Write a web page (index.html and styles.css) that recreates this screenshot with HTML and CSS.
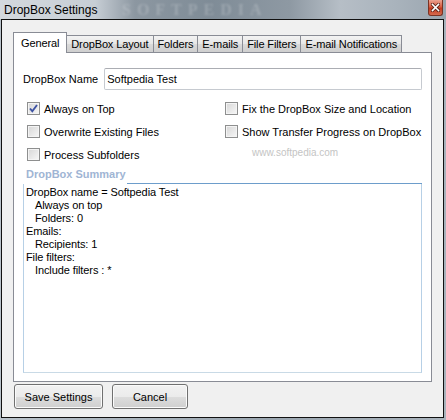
FILE: index.html
```html
<!DOCTYPE html>
<html lang="en">
<head>
    <meta charset="UTF-8">
    <meta name="viewport" content="width=device-width, initial-scale=1.0">
    <title>DropBox Settings</title>
    <link rel="stylesheet" href="styles.css">
</head>
<body>
    <div class="window">
        <div class="titlebar">
            <span class="title">DropBox Settings</span>
            <span class="title-mark">SOFTPEDIA</span>
            <div class="close">
                <svg width="9" height="9" viewBox="0 0 9 9">
                    <path d="M1.5 1.5 L7.5 7.5 M7.5 1.5 L1.5 7.5" stroke="#5a2418" stroke-width="3.2" stroke-linecap="square"/>
                    <path d="M1.5 1.5 L7.5 7.5 M7.5 1.5 L1.5 7.5" stroke="#fff" stroke-width="1.6" stroke-linecap="square"/>
                </svg>
            </div>
        </div>
        <div class="client">
            <div class="tabs">
                <div class="tab active">General</div>
                <div class="tab">DropBox Layout</div>
                <div class="tab">Folders</div>
                <div class="tab">E-mails</div>
                <div class="tab">File Filters</div>
                <div class="tab">E-mail Notifications</div>
            </div>
            <div class="panel">
                <div class="name-row">
                    <label for="dbname">DropBox Name</label>
                    <input type="text" id="dbname" value="Softpedia Test">
                </div>
                <div class="options">
                    <div class="check">
                        <span class="box">
                            <svg width="11" height="11" viewBox="0 0 11 11">
                                <path d="M2 5.5 L4.3 8.2 L9 2" fill="none" stroke="#3d52a3" stroke-width="1.9"/>
                            </svg>
                        </span>
                        Always on Top
                    </div>
                    <div class="check"><span class="box"></span>Fix the DropBox Size and Location</div>
                    <div class="check"><span class="box"></span>Overwrite Existing Files</div>
                    <div class="check"><span class="box"></span>Show Transfer Progress on DropBox</div>
                    <div class="check"><span class="box"></span>Process Subfolders</div>
                </div>
                <div class="summary-head">
                    <span class="summary-title">DropBox Summary</span>
                    <span class="rule"></span>
                </div>
                <div class="summary">
                    <div>DropBox name = Softpedia Test</div>
                    <div class="sub">Always on top</div>
                    <div class="sub">Folders: 0</div>
                    <div>Emails:</div>
                    <div class="sub">Recipients: 1</div>
                    <div>File filters:</div>
                    <div class="sub">Include filters : *</div>
                </div>
                <span class="watermark">www.softpedia.com</span>
            </div>
            <div class="buttons">
                <button class="btn save">Save Settings</button>
                <button class="btn cancel">Cancel</button>
            </div>
        </div>
    </div>
</body>
</html>
```

FILE: styles.css
```css
body {
    margin: 0;
    font-family: "Liberation Sans", Arial, sans-serif;
    font-size: 11px;
    color: #000;
}
.window {
    width: 446px;
    height: 420px;
    overflow: hidden;
    background: linear-gradient(90deg, #b9c2ca, #9aa6b0 60%, #a9b3bc);
}
.titlebar {
    position: relative;
    height: 19px;
    display: flex;
    align-items: center;
    padding-left: 4px;
    background: linear-gradient(90deg, #d4d9de 0, #c7ced5 95px, #8c97a1 135px, #7f8c97 210px, #8e99a3 290px, #b6bec6 340px, #a9b3bc 395px, #9aa5af 446px);
}
.title {
    font-size: 12px;
    position: relative;
    z-index: 1;
}
.title-mark {
    position: absolute;
    left: 122px;
    top: 1px;
    line-height: 18px;
    font-family: "Liberation Serif", serif;
    font-size: 16px;
    font-weight: bold;
    letter-spacing: 6px;
    color: rgba(255, 255, 255, 0.2);
    filter: blur(1px);
}
.close {
    position: absolute;
    right: 3px;
    top: 0;
    width: 15px;
    height: 16px;
    box-sizing: border-box;
    border: 1px solid #7a3324;
    border-top: none;
    border-radius: 0 0 3px 3px;
    background: linear-gradient(#eaa391, #d75c41 45%, #c23a1f 55%, #d66b4f);
    display: flex;
    align-items: center;
    justify-content: center;
}
.client {
    margin-left: 1px;
    width: 443px;
    height: 399px;
    box-sizing: border-box;
    border: 1px solid #111;
    background-color: #f0f0f0;
    padding: 12px 11px 0 11px;
}
.tabs {
    display: flex;
    align-items: flex-end;
    height: 20px;
}
.tab {
    height: 17px;
    box-sizing: border-box;
    padding: 0 4px;
    margin-right: -1px;
    display: flex;
    align-items: center;
    border: 1px solid #898c95;
    border-bottom: none;
    background: linear-gradient(#f3f3f3, #e6e6e6 50%, #dadada 51%, #cfcfcf);
    white-space: nowrap;
    letter-spacing: -0.12px;
}
.tab.active {
    height: 21px;
    margin-bottom: -1px;
    padding: 0 7px;
    background: #fff;
    position: relative;
    z-index: 1;
}
.panel {
    position: relative;
    height: 330px;
    box-sizing: border-box;
    border: 1px solid #898c95;
    background-color: #fff;
    padding: 15px 9px 0 9px;
}
.name-row {
    display: flex;
    align-items: center;
    gap: 6px;
}
.name-row input {
    flex: 1;
    height: 22px;
    box-sizing: border-box;
    padding: 0 2px;
    border: 1px solid #c6cad0;
    border-top-color: #abadb3;
    border-radius: 2px;
    font-family: inherit;
    font-size: 11px;
}
.options {
    display: grid;
    grid-template-columns: 198px 1fr;
    grid-auto-rows: 23px;
    margin: 7px 0 0 4px;
}
.check {
    display: flex;
    align-items: center;
    gap: 4px;
    white-space: nowrap;
}
.box {
    width: 13px;
    height: 13px;
    box-sizing: border-box;
    border: 1px solid #8e8f8f;
    background: linear-gradient(135deg, #d6d6d6, #f7f7f7);
    box-shadow: inset 0 0 0 1px #f4f4f4;
    display: flex;
    align-items: center;
    justify-content: center;
}
.summary-head {
    display: flex;
    align-items: flex-end;
    height: 17px;
    margin-top: 1px;
}
.summary-title {
    margin: 0 0 3px 3px;
    line-height: 14px;
    font-weight: bold;
    color: #9fb5d4;
}
.rule {
    flex: 1;
    height: 1px;
    margin-left: 1px;
    background-color: #6d9dcb;
}
.summary {
    height: 189px;
    box-sizing: border-box;
    border: 1px solid #b7d0e6;
    border-top: none;
    border-bottom-color: #c9dae6;
    padding: 2px 2px 0 2px;
    line-height: 13px;
    letter-spacing: -0.1px;
}
.summary .sub {
    padding-left: 9px;
}
.watermark {
    position: absolute;
    left: 238px;
    top: 94px;
    font-size: 10px;
    color: #c4c4c4;
}
.buttons {
    display: flex;
    gap: 9px;
    margin: 2px 0 0 1px;
}
.btn {
    height: 25px;
    box-sizing: border-box;
    border: 1px solid #707070;
    border-radius: 3px;
    background: linear-gradient(#f2f2f2, #ebebeb 50%, #dddddd 51%, #cfcfcf);
    box-shadow: inset 0 0 0 1px #fbfbfb;
    font-family: inherit;
    font-size: 11px;
    color: #000;
    padding: 0;
}
.save {
    width: 89px;
}
.cancel {
    width: 76px;
}
```
